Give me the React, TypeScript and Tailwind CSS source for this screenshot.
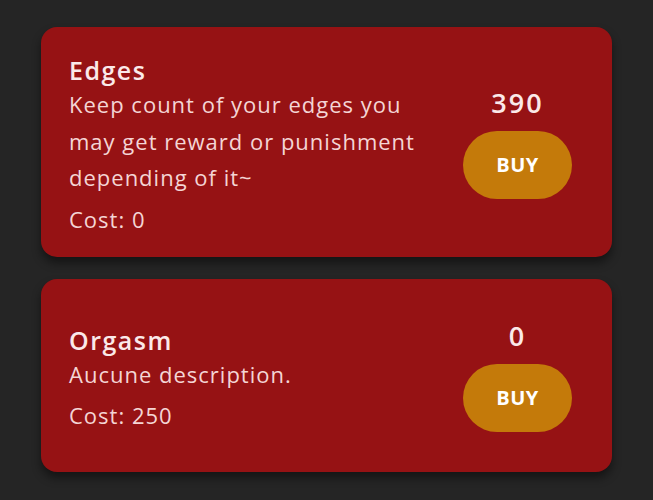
const items = [
  {
    name: 'Edges',
    description: 'Keep count of your edges you may get reward or punishment depending of it~',
    cost: 0,
    count: 390,
  },
  {
    name: 'Orgasm',
    description: 'Aucune description.',
    cost: 250,
    count: 0,
  },
];

export default function App() {
  return (
    <div
      className="min-h-screen bg-[#252525] px-[41px] pt-[27px] flex flex-col gap-[22px]"
      style={{ fontFamily: '"Open Sans", sans-serif' }}
    >
      {items.map((item) => (
        <div
          key={item.name}
          className="bg-[#961214] rounded-[16px] min-h-[193px] pl-[28px] pr-[40px] pt-[25px] pb-[20px] flex items-center justify-between shadow-[0_6px_10px_rgba(0,0,0,0.45)]"
        >
          <div className="flex flex-col w-[360px] text-[#f4d5d5]">
            <h2 className="text-[25px] font-semibold leading-[32px] tracking-[1.5px] mt-[2px] text-[#fbe9e9]">
              {item.name}
            </h2>
            <p className="text-[22px] leading-[36.5px] tracking-[1px]">{item.description}</p>
            <p className="text-[22px] leading-[36px] tracking-[1px] mt-[5px]">Cost: {item.cost}</p>
          </div>
          <div className="flex flex-col items-center gap-[16px]">
            <span className="text-[27px] font-semibold leading-[25px] tracking-[2px] text-[#fbe9e9]">
              {item.count}
            </span>
            <button className="w-[109px] h-[68px] rounded-full bg-[#c47a0a] text-white text-[20px] font-bold tracking-[0.5px]">
              BUY
            </button>
          </div>
        </div>
      ))}
    </div>
  );
}
